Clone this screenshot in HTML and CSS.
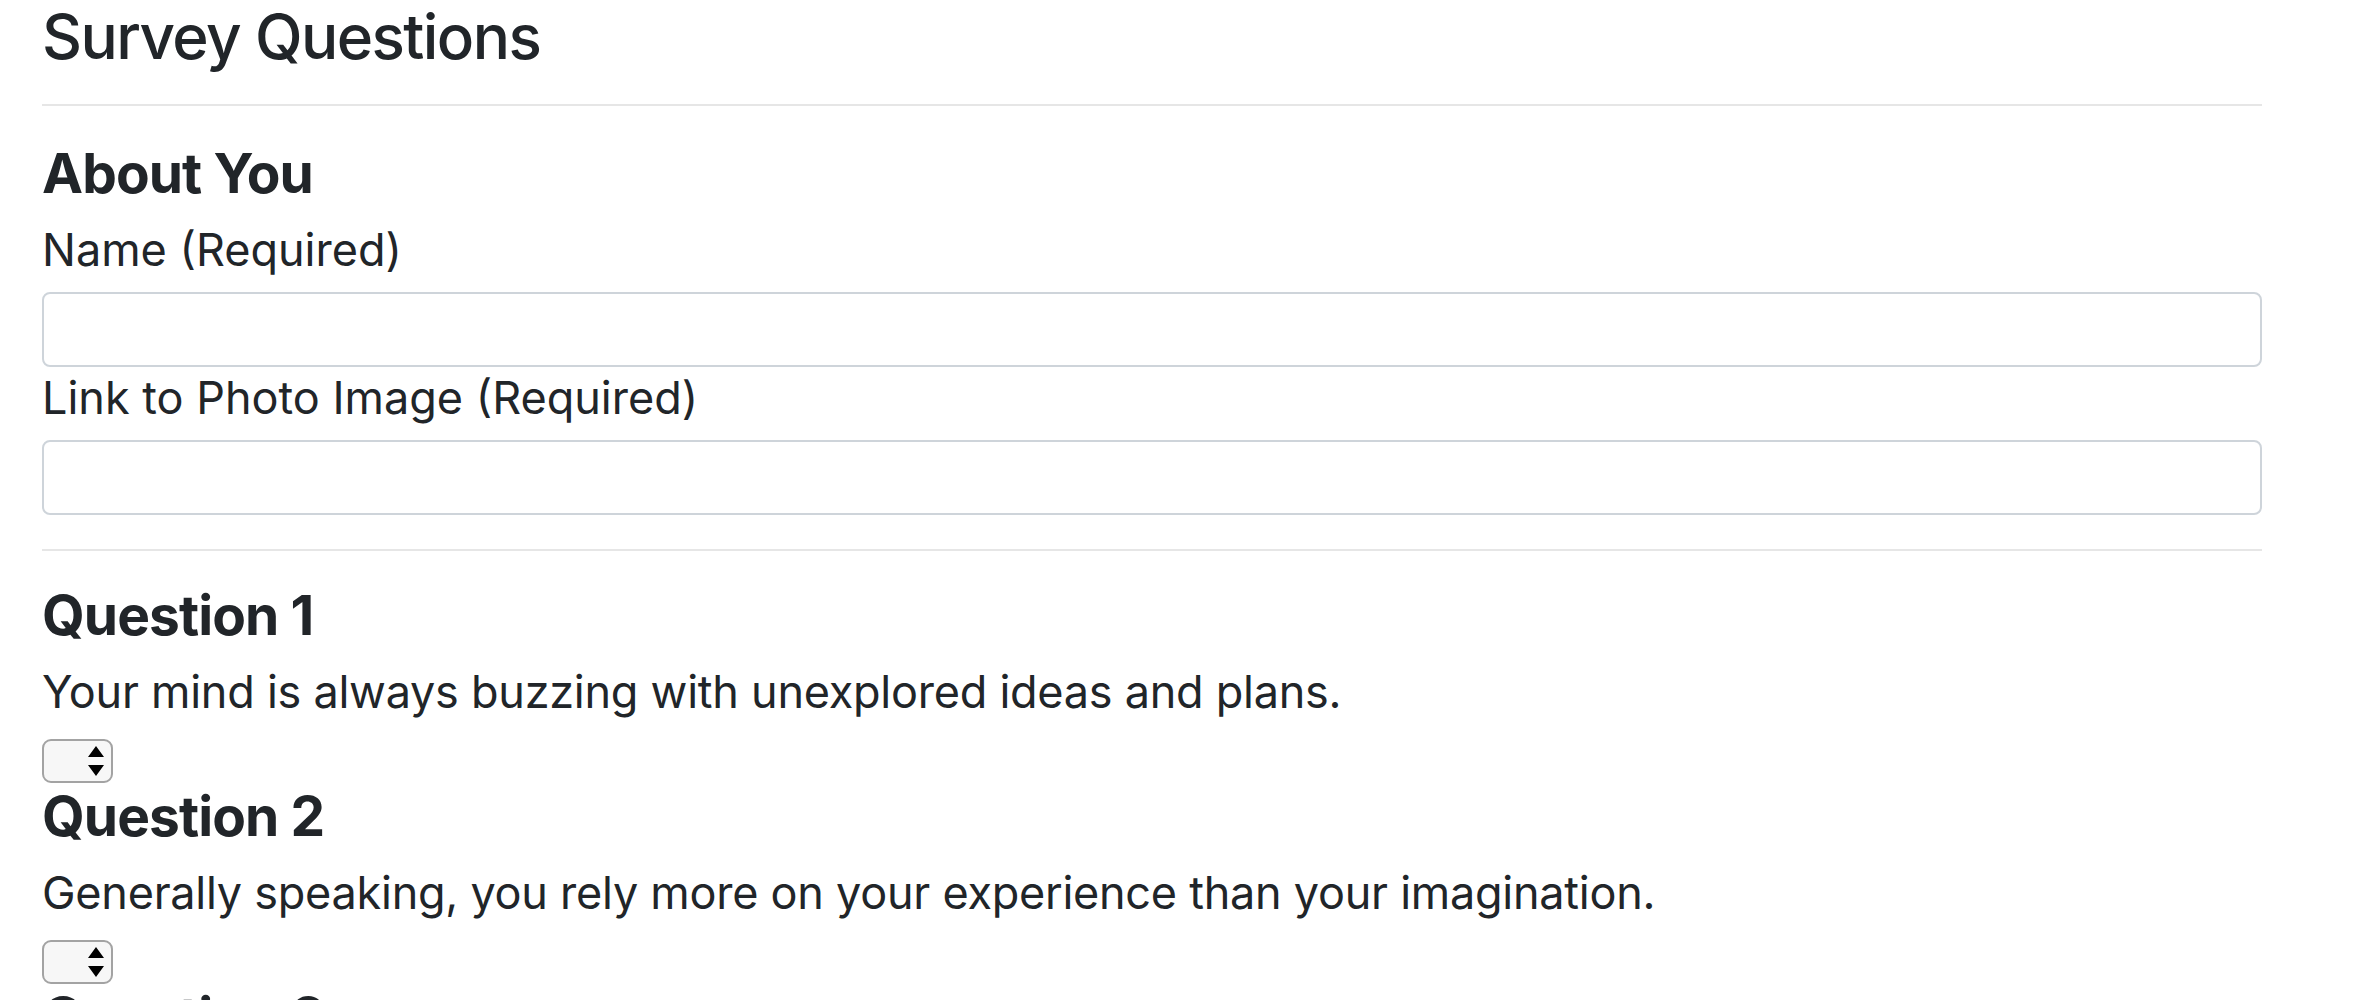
FILE: index.html
```html
<!DOCTYPE html>
<html lang="en">
<head>
<meta charset="utf-8">
<title>Survey Questions</title>
<link rel="stylesheet" href="styles.css">
</head>
<body>
<main class="survey">
  <h2 class="page-title">Survey Questions</h2>
  <hr class="rule">
  <section class="about">
    <h3 class="section-title">About You</h3>
    <label class="field-label" for="name">Name (Required)</label>
    <input class="text-input" id="name" type="text">
    <label class="field-label field-label--second" for="photo">Link to Photo Image (Required)</label>
    <input class="text-input" id="photo" type="text">
  </section>
  <hr class="rule rule--second">
  <section class="question">
    <h3 class="section-title">Question 1</h3>
    <p class="question-text">Your mind is always buzzing with unexplored ideas and plans.</p>
    <span class="select-wrap">
      <select class="score-select"><option></option><option>1</option><option>2</option><option>3</option><option>4</option><option>5</option></select>
      <svg class="select-arrows" width="16" height="30" viewBox="0 0 16 30"><path d="M8 0 L16 11 L0 11 Z M0 19 L16 19 L8 30 Z" fill="#000"/></svg>
    </span>
  </section>
  <section class="question">
    <h3 class="section-title">Question 2</h3>
    <p class="question-text">Generally speaking, you rely more on your experience than your imagination.</p>
    <span class="select-wrap">
      <select class="score-select"><option></option><option>1</option><option>2</option><option>3</option><option>4</option><option>5</option></select>
      <svg class="select-arrows" width="16" height="30" viewBox="0 0 16 30"><path d="M8 0 L16 11 L0 11 Z M0 19 L16 19 L8 30 Z" fill="#000"/></svg>
    </span>
  </section>
  <section class="question">
    <h3 class="section-title">Question 3</h3>
    <p class="question-text">You find it easy to stay relaxed and focused even when there is some pressure.</p>
    <span class="select-wrap">
      <select class="score-select"><option></option><option>1</option><option>2</option><option>3</option><option>4</option><option>5</option></select>
      <svg class="select-arrows" width="16" height="30" viewBox="0 0 16 30"><path d="M8 0 L16 11 L0 11 Z M0 19 L16 19 L8 30 Z" fill="#000"/></svg>
    </span>
  </section>
</main>
</body>
</html>
```
FILE: styles.css
```css
html, body {
  margin: 0;
  padding: 0;
  background: #ffffff;
}

body {
  font-family: Inter, "Liberation Sans", sans-serif;
  color: #212529;
}

.survey {
  width: 2220px;
  margin-left: 42px;
  display: flex;
  flex-direction: column;
  align-items: flex-start;
}

.page-title {
  margin: 0;
  font-size: 62px;
  font-weight: 500;
  letter-spacing: -1.6px;
  line-height: 74px;
}

.rule {
  align-self: stretch;
  margin: 30px 0 0 0;
  border: 0;
  border-top: 2px solid #e6e6e6;
  height: 0;
}

.rule--second {
  margin-top: 34px;
}

.about,
.question {
  align-self: stretch;
  display: flex;
  flex-direction: column;
  align-items: flex-start;
}

.section-title {
  margin: 34px 0 0 0;
  font-size: 55px;
  font-weight: 700;
  letter-spacing: -0.9px;
  line-height: 66px;
}

.question .section-title {
  margin-top: 0;
}

.about + .rule + .question .section-title {
  margin-top: 31px;
}

.field-label {
  margin-top: 17px;
  font-size: 45px;
  line-height: 54px;
}

.field-label--second {
  margin-top: 4px;
}

.text-input {
  align-self: stretch;
  margin-top: 15px;
  height: 75px;
  box-sizing: border-box;
  border: 2px solid #ced4da;
  border-radius: 8px;
  background: #fff;
  font-size: 32px;
  padding: 0 24px;
}

.question-text {
  margin: 17px 0 0 0;
  font-size: 45px;
  letter-spacing: -0.25px;
  line-height: 54px;
}

.select-wrap {
  position: relative;
  display: block;
  margin-top: 20px;
  width: 71px;
  height: 44px;
}

.score-select {
  -webkit-appearance: none;
  appearance: none;
  width: 71px;
  height: 44px;
  box-sizing: border-box;
  border: 2px solid #a3a3a3;
  border-radius: 9px;
  background: #f7f7f7;
  color: transparent;
  margin: 0;
  padding: 0;
}

.select-arrows {
  position: absolute;
  left: 46px;
  top: 7px;
  pointer-events: none;
}
```
